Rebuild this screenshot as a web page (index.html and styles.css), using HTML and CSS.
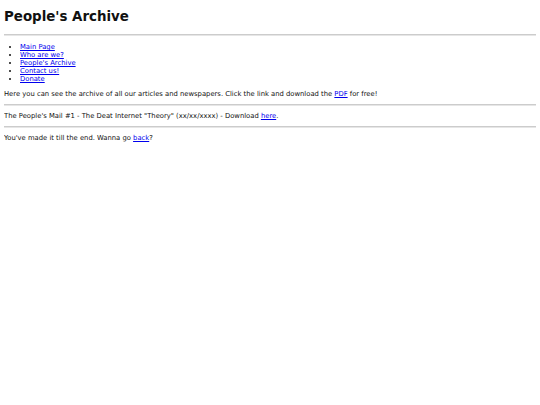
FILE: index.html
```html
<!DOCTYPE html>
<html>
<head>
<meta charset="utf-8">
<title>People's Archive</title>
<link rel="stylesheet" href="styles.css">
</head>
<body>
<h1 class="title">People's Archive</h1>
<hr class="rule">
<ul class="nav">
<li><a href="#">Main Page</a></li>
<li><a href="#">Who are we?</a></li>
<li><a href="#">People's Archive</a></li>
<li><a href="#">Contact us!</a></li>
<li><a href="#">Donate</a></li>
</ul>
<p class="text">Here you can see the archive of all our articles and newspapers. Click the link and download the <a href="#">PDF</a> for free!</p>
<hr class="rule">
<p class="text">The People's Mail #1 - The Deat Internet "Theory" (xx/xx/xxxx) - Download <a href="#">here</a>.</p>
<hr class="rule">
<p class="text">You've made it till the end. Wanna go <a href="#">back</a>?</p>
</body>
</html>
```
FILE: styles.css
```css
body {
  margin: 4px;
  font-family: "DejaVu Sans", Verdana, sans-serif;
  font-size: 6.8px;
  line-height: 8px;
  color: #111;
  background: #fff;
}
.title {
  font-size: 13.4px;
  line-height: 16px;
  margin: 5px 0 9px;
}
.rule {
  margin: 0;
  border: 0;
  height: 1px;
  background: #ccc;
  border-bottom: 1px solid #e6e6e6;
}
.nav {
  margin: 7px 0 7px;
  padding-left: 16px;
}
.text {
  margin: 6px 0;
}
a {
  color: #0000ee;
}
```
